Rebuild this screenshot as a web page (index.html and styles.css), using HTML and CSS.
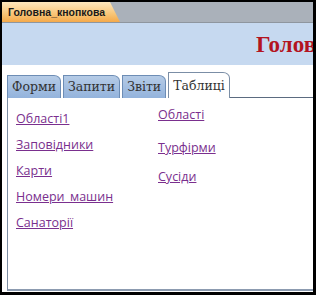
FILE: index.html
```html
<!DOCTYPE html>
<html lang="uk">
<head>
    <meta charset="UTF-8">
    <title>Головна_кнопкова</title>
    <link rel="stylesheet" href="styles.css">
</head>
<body>
<div class="frame">
  <div class="doc_tabs">
    <div class="doc_tab">Головна_кнопкова</div>
  </div>
  <div class="form_header">
    <div class="form_title">Головна кнопкова форма</div>
  </div>
  <div class="form_body">
    <div class="tab_strip">
      <div class="tab">Форми</div>
      <div class="tab">Запити</div>
      <div class="tab">Звіти</div>
      <div class="tab tab_active">Таблиці</div>
      <div class="tab_rest"></div>
    </div>
    <div class="tab_page">
      <div class="col col1">
        <a class="link">Області1</a>
        <a class="link">Заповідники</a>
        <a class="link">Карти</a>
        <a class="link">Номери_машин</a>
        <a class="link">Санаторії</a>
      </div>
      <div class="col col2">
        <a class="link">Області</a>
        <a class="link l2">Турфірми</a>
        <a class="link l3">Сусіди</a>
      </div>
    </div>
  </div>
</div>
</body>
</html>
```

FILE: styles.css
```css
body, html {
  margin: 0;
}
.frame {
  width: 311px;
  height: 290px;
  border-left: 2px solid #000;
  border-top: 2px solid #000;
  border-right: 3px solid #000;
  border-bottom: 3px solid #000;
  display: flex;
  flex-direction: column;
  background: #fff;
  overflow: hidden;
}
.doc_tabs {
  height: 20px;
  background: #aab1ba;
  border-bottom: 1px solid #8e969f;
  display: flex;
}
.doc_tab {
  width: 118px;
  height: 20px;
  box-sizing: border-box;
  padding: 4px 0 0 6px;
  font-family: "Liberation Sans", sans-serif;
  font-weight: bold;
  font-size: 10.5px;
  color: #1a1a1a;
  background: linear-gradient(#fde7bd, #f9c576 60%, #f5a94a);
  clip-path: polygon(0 0, 108px 0, 118px 20px, 0 20px);
}
.form_header {
  height: 42px;
  background: #c6d9f0;
  overflow: hidden;
}
.form_title {
  white-space: nowrap;
  padding: 9px 0 0 254px;
  font-family: "Liberation Serif", serif;
  font-weight: bold;
  font-size: 23px;
  color: #b3141f;
}
.form_body {
  flex: 1;
  display: flex;
  flex-direction: column;
  padding: 7px 0 0 5px;
}
.tab_strip {
  display: flex;
  align-items: flex-end;
  height: 26px;
}
.tab {
  height: 23px;
  box-sizing: border-box;
  padding: 3px 4px 0 4px;
  margin-right: 2px;
  font-family: "DejaVu Serif", serif;
  font-size: 12.5px;
  color: #333;
  background: linear-gradient(#b5cbe6, #93b3dc);
  border: 1px solid #6d8db5;
  border-bottom: none;
  border-top-right-radius: 7px 6px;
}
.tab_active {
  height: 26px;
  margin-right: 0;
  padding: 5px 4px 0 4px;
  background: #fff;
  border-color: #7b8ea6;
}
.tab_rest {
  flex: 1;
  border-bottom: 1px solid #5b6b80;
}
.tab_page {
  flex: 1;
  display: flex;
  border-left: 1px solid #7d8ea3;
  border-bottom: 2px solid #8c9bb0;
  margin-bottom: 1px;
}
.col {
  display: flex;
  flex-direction: column;
}
.col1 {
  width: 142px;
  padding: 12px 0 0 8px;
  gap: 8px;
}
.col2 {
  padding: 8px 0 0 0;
}
.link {
  font-family: "Open Sans", sans-serif;
  font-size: 12.5px;
  line-height: 18px;
  color: #7a2f8e;
  text-decoration: underline;
}
.l2 {
  margin-top: 15px;
}
.l3 {
  margin-top: 11px;
}
```
